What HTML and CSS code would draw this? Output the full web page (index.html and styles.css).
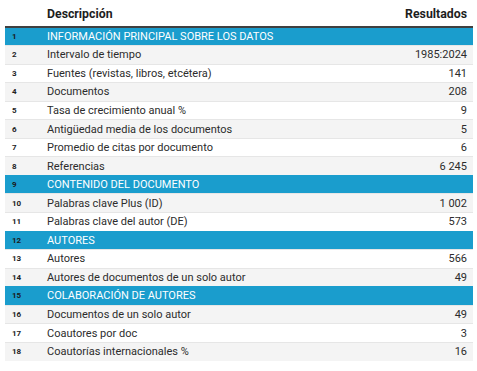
FILE: index.html
```html
<!DOCTYPE html>
<html lang="es">
<head>
<meta charset="utf-8">
<link rel="stylesheet" href="styles.css">
</head>
<body>
<table class="summary">
  <colgroup><col class="c-num"><col class="c-desc"><col class="c-res"></colgroup>
  <thead>
    <tr><th class="num"></th><th class="desc">Descripción</th><th class="res">Resultados</th></tr>
  </thead>
  <tbody>
    <tr class="section"><td class="num">1</td><td class="desc">INFORMACIÓN PRINCIPAL SOBRE LOS DATOS</td><td class="res"></td></tr>
    <tr><td class="num">2</td><td class="desc">Intervalo de tiempo</td><td class="res">1985:2024</td></tr>
    <tr><td class="num">3</td><td class="desc">Fuentes (revistas, libros, etcétera)</td><td class="res">141</td></tr>
    <tr><td class="num">4</td><td class="desc">Documentos</td><td class="res">208</td></tr>
    <tr><td class="num">5</td><td class="desc">Tasa de crecimiento anual %</td><td class="res">9</td></tr>
    <tr><td class="num">6</td><td class="desc">Antigüedad media de los documentos</td><td class="res">5</td></tr>
    <tr><td class="num">7</td><td class="desc">Promedio de citas por documento</td><td class="res">6</td></tr>
    <tr><td class="num">8</td><td class="desc">Referencias</td><td class="res">6 245</td></tr>
    <tr class="section"><td class="num">9</td><td class="desc">CONTENIDO DEL DOCUMENTO</td><td class="res"></td></tr>
    <tr><td class="num">10</td><td class="desc">Palabras clave Plus (ID)</td><td class="res">1 002</td></tr>
    <tr><td class="num">11</td><td class="desc">Palabras clave del autor (DE)</td><td class="res">573</td></tr>
    <tr class="section"><td class="num">12</td><td class="desc">AUTORES</td><td class="res"></td></tr>
    <tr><td class="num">13</td><td class="desc">Autores</td><td class="res">566</td></tr>
    <tr><td class="num">14</td><td class="desc">Autores de documentos de un solo autor</td><td class="res">49</td></tr>
    <tr class="section"><td class="num">15</td><td class="desc">COLABORACIÓN DE AUTORES</td><td class="res"></td></tr>
    <tr><td class="num">16</td><td class="desc">Documentos de un solo autor</td><td class="res">49</td></tr>
    <tr><td class="num">17</td><td class="desc">Coautores por doc</td><td class="res">3</td></tr>
    <tr><td class="num">18</td><td class="desc">Coautorías internacionales %</td><td class="res">16</td></tr>
  </tbody>
</table>
</body>
</html>
```
FILE: styles.css
```css
html, body {
  margin: 0;
  padding: 0;
  background: #ffffff;
}
body {
  padding: 0 4px 0 5px;
  font-family: Roboto, "Liberation Sans", sans-serif;
  color: #2c2c2c;
}
.summary {
  width: 468px;
  border-collapse: collapse;
  table-layout: fixed;
  font-size: 11px;
}
.c-num { width: 42px; }
.c-res { width: 110px; }
.summary th,
.summary td {
  box-sizing: border-box;
}
.summary th {
  height: 27px;
  font-weight: bold;
  font-size: 12.3px;
  color: #1e1e1e;
  border-bottom: 2px solid #404040;
  padding: 2px 0 0 0;
  vertical-align: middle;
}
.summary td {
  height: 18.55px;
  padding: 0;
  border-top: 1px solid #e6e6e6;
  vertical-align: middle;
}
.summary .num {
  padding-left: 7px;
  text-align: left;
  font-size: 8px;
  font-weight: bold;
  color: #222222;
}
.summary .desc {
  text-align: left;
}
.summary .res {
  text-align: right;
  padding-right: 6px;
}
.summary tbody tr:nth-child(even) td {
  background: #f4f4f4;
}
.summary tbody tr.section td {
  background: #1a9dcd;
  color: #ffffff;
  border-top-color: #1a9dcd;
}
.summary tbody tr.section .num {
  color: #1a1a1a;
}
```
